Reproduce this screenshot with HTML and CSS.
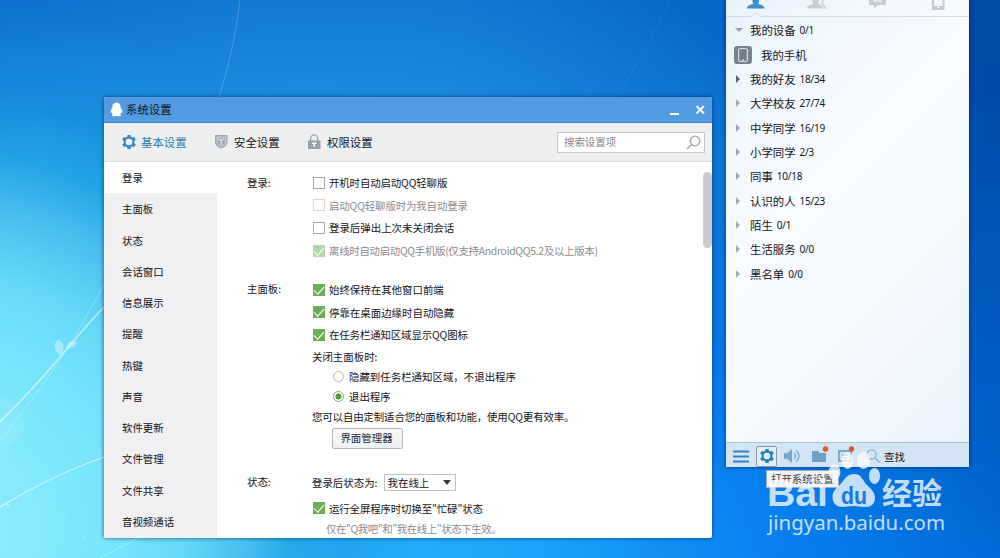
FILE: index.html
```html
<!DOCTYPE html>
<html lang="zh-CN">
<head>
<meta charset="UTF-8" />
<meta name="viewport" content="width=device-width, initial-scale=1" />
<title>系统设置</title>
<link rel="stylesheet" href="styles.css">
</head>
<body>
<svg width="0" height="0" class="defs">
  <symbol id="gear" viewBox="0 0 16 16">
    <path fill-rule="evenodd" d="M6.500 1h3l.4 1.700 1.600.9 1.800-.6 1.500 2.600-1.500 1.300v2.200l1.500 1.300-1.500 2.600-1.800-.6-1.600.9-.4 1.700h-3l-.4-1.700-1.600-.9-1.800.6-1.500-2.600 1.500-1.300V6.900L1.200 5.600l1.500-2.600 1.800.6 1.600-.9zM8 4.700a3.300 3.300 0 1 0 0 6.600 3.300 3.300 0 0 0 0-6.600z" fill="currentColor"/>
  </symbol>
</svg>

<div class="desktop">
  <!-- wallpaper strands -->
  <svg class="wallpaper" viewBox="0 0 1000 558">
    <path d="M0 422 Q34 388 60 357 T104 307" stroke-width="1.400" opacity=".6"/>
    <path d="M0 440 Q30 404 60 360 Q84 322 104 285" stroke-width=".8" opacity=".35"/>
    <path d="M0 507 Q50 476 104 457" stroke-width="1.100" opacity=".6"/>
    <path d="M100 558 L138 538" stroke-width="1" opacity=".35"/>
    <path d="M219 97 Q234 50 240 0" stroke-width=".8" opacity=".25"/>
    <path d="M622 90 Q650 40 670 0" stroke-width=".8" opacity=".08"/>
    <path class="leaf" d="M60 355c-6-4-7-12-2-15 6 1 8 9 2 15zM66 348c1-6 6-8 11-6-1 5-6 7-11 6z"/>
    <circle class="leaf dim" cx="-4" cy="423" r="28"/>
    <circle class="leaf" cx="8" cy="505" r="1.500"/>
    <circle class="leaf" cx="64" cy="514" r="1"/>
    <circle class="leaf" cx="73" cy="536" r=".8"/>
    <circle class="leaf" cx="84" cy="538" r="1"/>
  </svg>

  <div class="window">
    <div class="titlebar">
      <svg class="penguin" viewBox="0 0 14 15"><path d="M7 0c3 0 4.500 2.300 4.500 5.500 1 1.500 2 3.200 1.800 5.200-.2.800-.9.400-1.300-.3-.2 1-.6 1.800-1 2.300.8.400 1 1 .8 1.500-1 .8-4 .7-4.800.2-.8.500-3.800.6-4.800-.2-.2-.5 0-1.100.8-1.500-.4-.5-.8-1.300-1-2.300-.4.700-1.100 1.100-1.300.3-.2-2 .8-3.700 1.800-5.200C2.500 2.300 4 0 7 0z" fill="#fff"/></svg>
      <span class="title">系统设置</span>
      <svg class="controls" viewBox="0 0 36 12"><path d="M1 10h9" stroke-width="2"/><path d="M27.500 2l7.500 7.500M35 2l-7.500 7.500" stroke-width="1.800"/></svg>
    </div>

    <div class="toolbar">
      <div class="tab active"><svg viewBox="0 0 16 16"><use href="#gear"/></svg>基本设置</div>
      <div class="tab">
        <svg viewBox="0 0 16 16"><path d="M1 1h12.500v7c0 3.500-3.500 5.500-6.200 6.500C4.500 13.500 1 11.500 1 8z" fill="#a3a8b0"/><path d="M3 3h8.500v5c0 2-2 3.500-4.200 4.500C5 11.500 3 10 3 8z" fill="none" stroke="#dfe1e4" stroke-width=".8"/><path d="M4.500 4.700l2.800 1.800 2.700-1.800M7.300 6v5" fill="none" stroke="#e6e7ea" stroke-width="1.300"/></svg>安全设置
      </div>
      <div class="tab">
        <svg viewBox="0 0 16 16"><path d="M3.500 7V5a3.600 4 0 0 1 7.300 0v2" fill="none" stroke="#9a9fa8" stroke-width="1.200"/><path d="M1 6.500h12.500V15H1z" fill="#9a9fa8"/><path d="M5 9.300h4.500M7.200 9v4" stroke="#fff" stroke-width="1.500"/></svg>权限设置
      </div>
      <div class="search">
        <span>搜索设置项</span>
        <svg viewBox="0 0 15 15"><circle cx="9" cy="6" r="4.800"/><path d="M5.600 9.500L1 14"/></svg>
      </div>
    </div>

    <div class="main">
      <ul class="sidebar">
        <li class="current">登录</li>
        <li>主面板</li>
        <li>状态</li>
        <li>会话窗口</li>
        <li>信息展示</li>
        <li>提醒</li>
        <li>热键</li>
        <li>声音</li>
        <li>软件更新</li>
        <li>文件管理</li>
        <li>文件共享</li>
        <li>音视频通话</li>
      </ul>

      <div class="content">
        <div class="group">
          <div class="label">登录:</div>
          <div class="options">
            <div class="check tight"><i class="box"></i>开机时自动启动QQ轻聊版</div>
            <div class="check tight disabled"><i class="box"></i>启动QQ轻聊版时为我自动登录</div>
            <div class="check"><i class="box"></i>登录后弹出上次未关闭会话</div>
            <div class="check tighter disabled"><i class="box on"></i>离线时自动启动QQ手机版(仅支持AndroidQQ5.2及以上版本)</div>
          </div>
        </div>

        <div class="group panel-group">
          <div class="label">主面板:</div>
          <div class="options">
            <div class="check"><i class="box on"></i>始终保持在其他窗口前端</div>
            <div class="check"><i class="box on"></i>停靠在桌面边缘时自动隐藏</div>
            <div class="check tight"><i class="box on"></i>在任务栏通知区域显示QQ图标</div>
            <div class="text">关闭主面板时:</div>
            <div class="radio"><i class="dot"></i>隐藏到任务栏通知区域，不退出程序</div>
            <div class="radio"><i class="dot on"></i>退出程序</div>
            <div class="text tight">您可以自由定制适合您的面板和功能，使用QQ更有效率。</div>
            <button class="manager">界面管理器</button>
          </div>
        </div>

        <div class="group status-group">
          <div class="label">状态:</div>
          <div class="options">
            <div class="status">登录后状态为:<span class="select">我在线上<i class="arrow"></i></span></div>
            <div class="check tight"><i class="box on"></i>运行全屏程序时切换至"忙碌"状态</div>
            <div class="hint">仅在"Q我吧"和"我在线上"状态下生效。</div>
          </div>
        </div>
      </div>
      <div class="scrollbar"></div>
    </div>
  </div>

  <div class="contacts">
    <svg class="contact-tabs" viewBox="0 0 243 18">
      <path d="M0 16.500h25.500l4-4 4 4H243" fill="none" stroke="#d3dce6"/>
      <path d="M26.500-2h6.500v4l-1 1.500c1.500 1.500 6.500 1 6.500 5H21c0-4 5-3.500 6.500-5L26.500 2z" fill="#3b8fd0"/>
      <path d="M86.500-2h6.500v4l-1 1.500c1.500 1.500 5 1 5.500 5H81c0-4 5-3.500 6.500-5L86.500 2z" fill="#c8cdd4"/>
      <path d="M94-1h2.500v4c-1 1 2 2 3.500 6" fill="none" stroke="#c8cdd4" stroke-width="1.500"/>
      <path d="M143-3h17v8h-8l-4 3.500V5h-5z" fill="#c8cdd4"/><path d="M147 1h9" stroke="#fff"/>
      <path d="M207-3v12h10.500V-3" fill="none" stroke="#c4cad2" stroke-width="2"/><path d="M206 6h12v3h-12z" fill="#c4cad2"/><circle cx="212.200" cy="7.300" r="1" fill="#fff"/>
    </svg>
    <ul class="groups">
      <li><i class="tri down"></i>我的设备 <em>0/1</em></li>
      <li class="device"><svg viewBox="0 0 18 18"><rect width="18" height="18" rx="3" fill="#79818d"/><rect x="4.700" y="2.700" width="8.600" height="12.600" rx="1" fill="#737b87" stroke="#eef1f5"/><path d="M8 14h2" stroke="#fff"/></svg>我的手机</li>
      <li><i class="tri dark"></i>我的好友 <em>18/34</em></li>
      <li><i class="tri"></i>大学校友 <em>27/74</em></li>
      <li><i class="tri"></i>中学同学 <em>16/19</em></li>
      <li><i class="tri"></i>小学同学 <em>2/3</em></li>
      <li><i class="tri"></i>同事 <em>10/18</em></li>
      <li><i class="tri"></i>认识的人 <em>15/23</em></li>
      <li><i class="tri"></i>陌生 <em>0/1</em></li>
      <li><i class="tri"></i>生活服务 <em>0/0</em></li>
      <li><i class="tri"></i>黑名单 <em>0/0</em></li>
    </ul>
    <div class="footer">
      <svg class="menu" viewBox="0 0 16 13"><path d="M0 1.500h16M0 6.500h16M0 11.500h16" stroke="#3384bd" stroke-width="2.200"/></svg>
      <span class="gear-btn"><svg viewBox="0 0 16 16"><use href="#gear"/></svg></span>
      <svg class="sound" viewBox="0 0 17 16"><path d="M0 5h3.500L8 1v14l-4.500-4H0z" fill="#7ba9cc"/><path d="M10.200 5c1.500 1.500 1.500 4.500 0 6M12 2.500c4 3 4 8 0 11" fill="none" stroke="#7ba9cc" stroke-width="1.300"/></svg>
      <svg class="folder" viewBox="0 0 18 17"><path d="M1 5h6l1.500 2H15v9H1z" fill="#6f9fc5"/><circle cx="14.500" cy="3" r="2.700" fill="#dd5530"/></svg>
      <svg class="folder" viewBox="0 0 18 17"><path d="M2 5h12v10H2zM5 9h6M5 12h5" fill="none" stroke="#7ba9cc" stroke-width="2"/><circle cx="14.500" cy="3" r="2.700" fill="#dd5530"/></svg>
      <svg class="find" viewBox="0 0 14 14"><circle cx="5.500" cy="5.500" r="4.700" fill="none" stroke="#84b2d4" stroke-width="1.300"/><path d="M9 9l4.500 4.500" stroke="#84b2d4" stroke-width="1.700"/></svg>
      <span>查找</span>
    </div>
  </div>

  <div class="tooltip">打开系统设置</div>

  <svg class="watermark" viewBox="0 0 190 92">
    <g class="mark">
      <text x="2" y="56" class="bai" textLength="61" lengthAdjust="spacingAndGlyphs">Bai</text>
      <ellipse cx="82.500" cy="10.500" rx="6" ry="8.500"/>
      <ellipse cx="98.500" cy="10.500" rx="6.500" ry="8.500"/>
      <ellipse cx="69.500" cy="22" rx="6" ry="7.500"/>
      <ellipse cx="109.500" cy="26" rx="5.500" ry="8"/>
      <path d="M89 24c7 0 8 5 12 10 5 5 9 8 9 14 0 6-4 9-10 9-5 0-7-1-11.500-1s-7 1-11 1c-6 0-10-4-10-10 0-7 5-9 9-14 4-5 6-9 12.500-9z"/>
      <text x="117" y="54" class="jy" textLength="60" lengthAdjust="spacingAndGlyphs">经验</text>
      <text x="3" y="80" class="url" textLength="177" lengthAdjust="spacingAndGlyphs">jingyan.baidu.com</text>
    </g>
    <text x="76" y="54" class="du" textLength="26" lengthAdjust="spacingAndGlyphs">du</text>
  </svg>
</div>
</body>
</html>
```

FILE: styles.css
```css
* {
  box-sizing: border-box;
}
body {
  margin: 0;
  font-family: "Noto Sans CJK SC", sans-serif;
  font-size: 10.45px;
  color: #141418;
}
ul {
  list-style: none;
  margin: 0;
  padding: 0;
}
i, em {
  font-style: normal;
}
.defs {
  display: none;
}
.desktop {
  position: relative;
  width: 1000px;
  height: 558px;
  overflow: hidden;
  background:
    radial-gradient(ellipse 430px 490px at -40px 530px, #90effd 0%, #76e4fb 38%, #64d8f6 52%, rgba(74, 192, 238, 0.95) 66%, rgba(34, 168, 231, 0.85) 77%, rgba(24, 150, 224, 0.45) 90%, rgba(20, 130, 220, 0) 108%),
    radial-gradient(ellipse 720px 460px at 300px 590px, #2db4fc 0%, rgba(28, 164, 250, 0.95) 35%, rgba(10, 135, 245, 0.75) 65%, rgba(6, 110, 225, 0) 100%),
    radial-gradient(ellipse 560px 230px at 300px 180px, rgba(38, 160, 235, 0.85) 0%, rgba(34, 150, 230, 0.6) 45%, rgba(20, 130, 220, 0) 100%),
    linear-gradient(to bottom, rgba(0, 120, 240, 0) 10%, rgba(0, 120, 240, 0.65) 100%),
    linear-gradient(to right, #0b6ecb 0%, #0d73cf 45%, #0565c8 75%, #004aa5 97%);
}
.wallpaper {
  position: absolute;
  inset: 0;
  fill: none;
  stroke: #fff;
}
.wallpaper .leaf {
  fill: #fff;
  stroke: none;
  opacity: 0.4;
}
.wallpaper .dim {
  opacity: 0.08;
}

/* Settings window */
.window {
  position: absolute;
  left: 104px;
  top: 97px;
  width: 608px;
  height: 441px;
  background: #fff;
  border-radius: 2px;
  box-shadow: 0 0 4px rgba(0, 35, 80, 0.7);
  display: flex;
  flex-direction: column;
  overflow: hidden;
}
.titlebar {
  height: 26px;
  flex: none;
  background: #529be0;
  border-bottom: 1px solid #4288c8;
  display: flex;
  align-items: center;
  padding: 0 7px 0 6px;
}
.penguin {
  width: 13px;
  height: 15px;
  margin-right: 3px;
}
.title {
  font-size: 11.4px;
  flex: 1;
  padding-bottom: 1px;
}
.controls {
  width: 36px;
  height: 12px;
  stroke: #fff;
  fill: none;
}
.toolbar {
  height: 39px;
  flex: none;
  background: #edeff0;
  border-bottom: 1px solid #d9dbdc;
  display: flex;
  align-items: center;
  padding: 0 7px 0 17px;
}
.tab {
  display: flex;
  align-items: center;
  width: 93px;
  font-size: 11.4px;
}
.tab svg {
  width: 16px;
  height: 16px;
  margin-right: 4px;
}
.tab.active {
  color: #2c7ea5;
}
.tab.active svg {
  color: #3c8bcc;
}
.search {
  margin-left: auto;
  width: 148px;
  height: 21px;
  border: 1px solid #c4c6c8;
  background: #fff;
  color: #858585;
  display: flex;
  align-items: center;
  justify-content: space-between;
  padding: 0 3px 0 6px;
}
.search span {
  padding-bottom: 2px;
}
.search svg {
  width: 15px;
  height: 15px;
  fill: none;
  stroke: #a3a3a3;
  stroke-width: 1.3;
}
.main {
  flex: 1;
  display: flex;
  min-height: 0;
}
.sidebar {
  width: 113px;
  background: #f0eff1;
}
.sidebar li {
  height: 31.25px;
  padding-left: 18px;
  display: flex;
  align-items: center;
}
.sidebar .current {
  background: #fff;
}
.content {
  flex: 1;
  padding: 9.5px 0 0 30px;
  white-space: nowrap;
}
.group {
  display: flex;
}
.label {
  width: 65px;
  line-height: 22.6px;
}
.panel-group {
  margin-top: 16.6px;
}
.status-group {
  margin-top: 22px;
}
.check {
  display: flex;
  align-items: center;
  height: 22.6px;
}
.tight {
  letter-spacing: -0.14px;
}
.tighter {
  letter-spacing: -0.31px;
}
.box {
  width: 12px;
  height: 12px;
  border: 1px solid #a9a9ab;
  background: #fff;
  margin: 0 4px 0 1px;
  display: flex;
  justify-content: center;
}
.box.on {
  background: #6bb052;
  border-color: #6bb052;
}
.box.on::after {
  content: "";
  width: 5px;
  height: 9px;
  margin-top: -1px;
  flex: none;
  border: solid #fff;
  border-width: 0 1.7px 1.7px 0;
  transform: rotate(42deg);
}
.disabled {
  color: #8c8c8e;
}
.disabled .box {
  border-color: #d8d8d8;
}
.disabled .box.on {
  background: #b2d8a5;
  border-color: #b2d8a5;
}
.text {
  height: 20.3px;
  line-height: 21px;
}
.radio {
  height: 19.7px;
  display: flex;
  align-items: center;
  padding-left: 21px;
}
.dot {
  width: 11px;
  height: 11px;
  border: 1px solid #b5b5b7;
  border-radius: 50%;
  margin-right: 5px;
}
.dot.on {
  border-color: #8d9c8a;
  background: radial-gradient(circle, #4f9f39 0 2.8px, #fff 3.3px);
}
.manager {
  display: block;
  margin: 1.5px 0 0 20px;
  width: 71px;
  height: 21px;
  padding: 0 2px 1px 0;
  border: 1px solid #b3b6b9;
  border-radius: 2px;
  background: linear-gradient(#fafafa, #eeeff1);
  font: inherit;
  line-height: 18px;
  color: #1c2c3c;
}
.status {
  height: 22px;
  margin-bottom: 4px;
  padding-top: 1px;
  display: flex;
  align-items: center;
}
.select {
  margin-left: 6px;
  width: 72px;
  height: 17px;
  border: 1px solid #c0c1c3;
  display: flex;
  align-items: center;
  justify-content: space-between;
  padding: 0 4px 0 3px;
}
.arrow {
  border: 4px solid transparent;
  border-top: 5px solid #3c3c3c;
  border-bottom: 0;
}
.hint {
  padding-left: 14px;
  line-height: 20px;
  color: #8c8c8e;
  letter-spacing: -0.45px;
}
.scrollbar {
  width: 9px;
  height: 76px;
  margin-top: 10px;
  border-radius: 5px;
  background: #cbcacd;
}

/* Contact list */
.contacts {
  position: absolute;
  left: 726px;
  top: 0;
  width: 243px;
  height: 467px;
  background: linear-gradient(135deg, #e8f3fd 0%, #f8fbff 38%, #f5f9fe 65%, #e8f1fc 100%);
  box-shadow: 0 0 4px rgba(0, 25, 80, 0.75);
  border-radius: 0 0 2px 2px;
  display: flex;
  flex-direction: column;
}
.contact-tabs {
  width: 243px;
  height: 18px;
  flex: none;
}
.groups {
  flex: 1;
  font-size: 11.4px;
}
.groups li {
  height: 24.35px;
  display: flex;
  align-items: center;
  padding-left: 9px;
}
.groups em {
  font-family: "Noto Sans", sans-serif;
  font-size: 10px;
  letter-spacing: -0.25px;
  margin-left: 4px;
}
.tri {
  width: 8px;
  margin-right: 7px;
}
.tri::before {
  content: "";
  display: block;
  width: 0;
  border: 4px solid transparent;
  border-left: 4px solid #a3a9b0;
  border-right: 0;
  margin-left: 1px;
}
.tri.dark::before {
  border-left-color: #5c636c;
}
.tri.down::before {
  border: 4px solid transparent;
  border-top: 4px solid #9aa1a9;
  border-bottom: 0;
  margin-left: 0;
}
.groups .device {
  padding-left: 8px;
}
.device svg {
  width: 18px;
  height: 18px;
  margin-right: 9px;
}
.footer {
  height: 25px;
  border-top: 1px solid #a9c5de;
  background: #d3e4f5;
  display: flex;
  align-items: center;
  padding: 2px 0 0 7px;
}
.menu {
  width: 16px;
  height: 13px;
}
.gear-btn {
  width: 21px;
  height: 21px;
  margin: 0 7px;
  border: 1px solid #8d9ba8;
  border-radius: 2px;
  background: #e3edf7;
  color: #2c7fba;
  display: flex;
  align-items: center;
  justify-content: center;
}
.gear-btn svg {
  width: 16px;
  height: 16px;
}
.sound {
  width: 17px;
  height: 16px;
  margin-right: 10px;
}
.folder {
  width: 18px;
  height: 17px;
  margin: -3px 8px 0 0;
}
.find {
  width: 14px;
  height: 14px;
  margin: 0 4px 0 3px;
}
.tooltip {
  position: absolute;
  left: 766px;
  top: 470px;
  width: 73px;
  height: 18px;
  padding-left: 4px;
  line-height: 16px;
  white-space: nowrap;
  color: #444;
  background: #eef1f5;
  border: 1px solid #9aabbc;
}

/* Watermark */
.watermark {
  position: absolute;
  left: 765px;
  top: 450px;
  width: 190px;
  height: 92px;
}
.mark {
  fill: #fff;
  opacity: 0.76;
}
.bai {
  font: bold 37px "Liberation Sans", sans-serif;
}
.jy {
  font: bold 30px "Noto Sans CJK SC", sans-serif;
}
.url {
  font: 20.5px "Noto Sans", sans-serif;
}
.du {
  font: bold 24px "Liberation Sans", sans-serif;
  fill: #1678e0;
}
```
